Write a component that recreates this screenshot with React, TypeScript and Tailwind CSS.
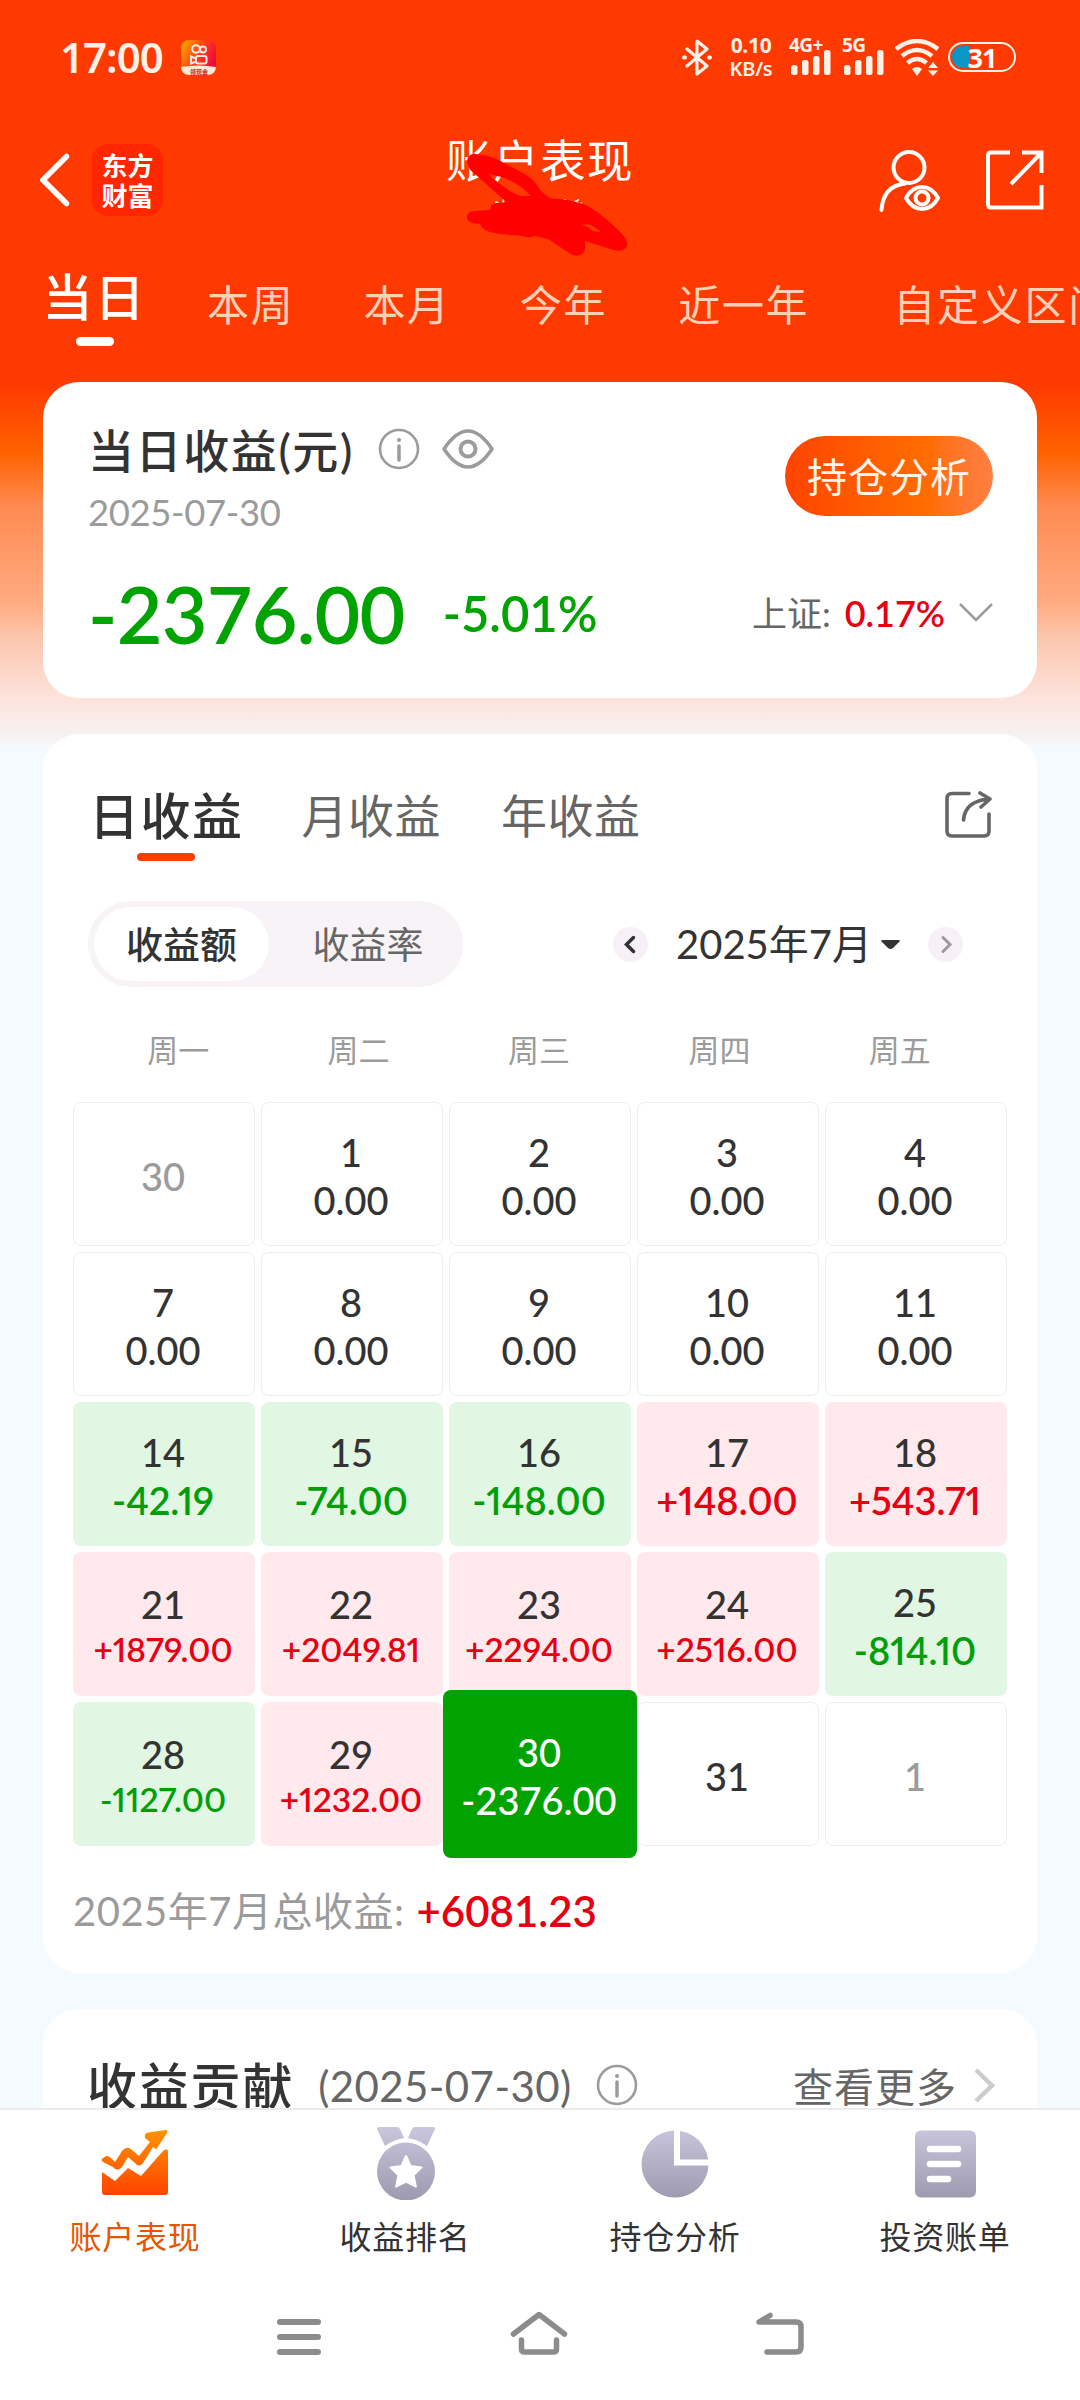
import type { ReactNode } from 'react';
import clsx from 'clsx';

type Tone = 'muted' | 'flat' | 'up' | 'down' | 'selected';

interface DayCell {
  day: number;
  value?: string;
  tone: Tone;
}

const PERIODS = ['当日', '本周', '本月', '今年', '近一年', '自定义区间'];
const WEEKDAYS = ['周一', '周二', '周三', '周四', '周五'];

const DAYS: DayCell[] = [
  { day: 30, tone: 'muted' },
  { day: 1, value: '0.00', tone: 'flat' },
  { day: 2, value: '0.00', tone: 'flat' },
  { day: 3, value: '0.00', tone: 'flat' },
  { day: 4, value: '0.00', tone: 'flat' },
  { day: 7, value: '0.00', tone: 'flat' },
  { day: 8, value: '0.00', tone: 'flat' },
  { day: 9, value: '0.00', tone: 'flat' },
  { day: 10, value: '0.00', tone: 'flat' },
  { day: 11, value: '0.00', tone: 'flat' },
  { day: 14, value: '-42.19', tone: 'down' },
  { day: 15, value: '-74.00', tone: 'down' },
  { day: 16, value: '-148.00', tone: 'down' },
  { day: 17, value: '+148.00', tone: 'up' },
  { day: 18, value: '+543.71', tone: 'up' },
  { day: 21, value: '+1879.00', tone: 'up' },
  { day: 22, value: '+2049.81', tone: 'up' },
  { day: 23, value: '+2294.00', tone: 'up' },
  { day: 24, value: '+2516.00', tone: 'up' },
  { day: 25, value: '-814.10', tone: 'down' },
  { day: 28, value: '-1127.00', tone: 'down' },
  { day: 29, value: '+1232.00', tone: 'up' },
  { day: 30, value: '-2376.00', tone: 'selected' },
  { day: 31, tone: 'flat' },
  { day: 1, tone: 'muted' },
];

function SignalBars() {
  return (
    <svg width="40" height="25" viewBox="0 0 40 25" fill="#fff0e8">
      <rect x="0" y="15" width="6.5" height="10" rx="2.5" />
      <rect x="11" y="10" width="6.5" height="15" rx="2.5" />
      <rect x="22" y="6" width="6.5" height="19" rx="2.5" />
      <rect x="33" y="0" width="6.5" height="25" rx="2.5" />
    </svg>
  );
}

function StatusBar() {
  return (
    <div className="flex h-[114px] items-center pl-[60px] pr-16 font-['Noto_Sans',sans-serif] text-[#fff0e8]">
      <span className="w-[121px] text-[42px] font-semibold leading-none tracking-[-1px]">17:00</span>
      <svg width="35" height="35" viewBox="0 0 35 35">
        <defs>
          <linearGradient id="ks" x1="0" y1="0" x2="1" y2="0.5">
            <stop offset="0" stopColor="#ffb000" />
            <stop offset="0.5" stopColor="#ff4a12" />
            <stop offset="1" stopColor="#f0083c" />
          </linearGradient>
        </defs>
        <rect width="35" height="35" rx="8" fill="url(#ks)" />
        <path d="M0 27q17-3 35 0a8 8 0 0 1-8 8H8a8 8 0 0 1-8-8z" fill="#ffe9d6" />
        <g fill="none" stroke="#ffe9e0" strokeWidth="2">
          <circle cx="15" cy="9" r="3.8" />
          <circle cx="22" cy="9.5" r="3" />
          <rect x="15" y="16" width="10.500" height="7.500" rx="2" />
          <path d="M15 18.500l-5-2v7l5-2z" />
        </g>
        <text x="9" y="33.500" fontSize="6" fontWeight="700" fill="#d8202c" fontFamily="Noto Sans CJK SC">领现金</text>
      </svg>

      <div className="ml-auto flex items-center">
        <svg width="30" height="37" viewBox="0 0 30 37" fill="none" stroke="#fff0e8" strokeWidth="3.200" strokeLinejoin="round" strokeLinecap="round">
          <path d="M5 10l20 17-10 8V2l10 8L5 27" />
          <path d="M2 18.500h1M27 18.500h1" strokeWidth="4" />
        </svg>
        <div className="ml-[17px] flex w-[44px] flex-col items-center text-[21px] font-bold leading-[23px] tracking-[-0.300px]">
          <span>0.10</span>
          <span className="text-[20px] font-semibold">KB/s</span>
        </div>
        <div className="relative ml-[18px] flex h-[36px] w-[42px] items-end">
          <span className="absolute -left-[2px] -top-[3px] text-[19px] font-bold leading-none tracking-[-0.500px]">4G+</span>
          <SignalBars />
        </div>
        <div className="relative ml-[11px] flex h-[36px] w-[42px] items-end">
          <span className="absolute -left-[2px] -top-[3px] text-[19px] font-bold leading-none tracking-[-0.500px]">5G</span>
          <SignalBars />
        </div>
        <svg className="ml-[9px]" width="44" height="37" viewBox="0 0 44 37" fill="none" stroke="#fff0e8" strokeWidth="4.500">
          <path d="M1 10Q22-6 43 10" />
          <path d="M7 17Q22 5 37 17" />
          <path d="M12.500 24Q22 16 31.500 24" />
          <path d="M17 30q5-4 10 0l-5 7z" fill="#fff0e8" stroke="none" />
          <path d="M33 29l5-6 5 6zM33 31.500l5 5.500 5-5.500z" fill="#fff0e8" stroke="none" />
        </svg>
        <div className="relative ml-[9px] flex h-[30px] w-[68px] items-center justify-center rounded-full border-2 border-[#fff0e8]">
          <div className="absolute bottom-[2px] left-[2px] top-[2px] w-[18px] rounded-l-full bg-[#0a96c8]" />
          <span className="relative text-[27px] font-bold leading-none tracking-[-1px] text-white">31</span>
        </div>
      </div>
    </div>
  );
}

function Header() {
  return (
    <div className="relative flex h-[132px] items-center pl-10 pr-9">
      <svg width="30" height="54" viewBox="0 0 30 54" fill="none" stroke="#fff" strokeWidth="5.500" strokeLinecap="round">
        <path d="M26.500 3.500L3 27l23.500 23.500" />
      </svg>
      <div className="ml-[22px] flex h-[72px] w-[71px] flex-col items-center justify-center rounded-2xl bg-[#ff2600] font-['Noto_Sans_CJK_SC',sans-serif] text-[26px] font-bold leading-[30px] text-white">
        <span>东方</span>
        <span>财富</span>
      </div>
      <div className="absolute left-1/2 top-[23px] -translate-x-1/2 text-[45.500px] leading-[48px] tracking-[1.500px] text-white">账户表现</div>
      {/* hand-drawn marker over the account name */}
      <svg className="absolute left-[440px] top-[16px]" width="200" height="130" viewBox="0 0 600 390">
        <path d="M190 208v10M165 216l10 2M375 207v10M395 222l22-14M404 212l30 22M412 228l14-10" stroke="#ffe9dd" strokeWidth="5" fill="none" />
        <path
          fillRule="evenodd"
          fill="#ff0000"
          d="M110 73Q150 76 180 92T245 127T292 167T332 205Q390 208 440 226Q500 262 546 312Q566 335 560 350Q548 368 518 359L435 333Q438 362 426 373Q408 384 386 368L325 328L285 318Q262 326 250 318L180 312Q125 304 120 281Q92 284 82 268Q76 250 96 244L152 239Q150 220 172 219L200 217L92 121Q72 90 90 76Q98 70 110 73ZM145 132Q170 158 218 188L242 198L272 198Q240 160 182 140ZM424 284L445 292L458 302L484 308Q462 288 446 283Z"
        />
      </svg>
      <svg className="ml-auto" width="64" height="64" viewBox="0 0 64 64" fill="none" stroke="#fff" strokeWidth="4">
        <circle cx="31" cy="19.500" r="15.500" />
        <path d="M3.500 62Q5 38 27 35.500" strokeLinecap="round" />
        <path d="M28 50Q34 39 44 39T60 50Q54 61 44 61T28 50Z" strokeLinejoin="round" />
        <circle cx="44" cy="50" r="6.500" />
      </svg>
      <svg className="ml-[44px]" width="58" height="60" viewBox="0 0 58 60" fill="none" stroke="#fff" strokeWidth="4">
        <path d="M24 2.500H5Q2 2.500 2 5.500V54Q2 57.500 5 57.500H55.500V35" />
        <path d="M36 2.500H55.500V23M55 3L25 34" />
      </svg>
    </div>
  );
}

function PeriodTabs() {
  return (
    <div className="flex h-[136px] overflow-hidden whitespace-nowrap pl-[44px]">
      {PERIODS.map((label, i) =>
        i === 0 ? (
          <div key={label} className="flex w-[101px] shrink-0 flex-col items-center pt-[26px] text-white">
            <span className="text-[50px] font-medium leading-[50px] tracking-[2px]">{label}</span>
            <span className="mt-[15px] h-[9px] w-[38px] rounded-full bg-white" />
          </div>
        ) : (
          <span
            key={label}
            className={clsx(
              'shrink-0 pt-[34px] text-[42px] leading-[50px] tracking-[1.700px] text-[#ffd0b8]',
              i === 1 && 'ml-[62px]',
              i > 1 && i < 4 && 'ml-[69px]',
              i === 4 && 'ml-[71px]',
              i === 5 && 'ml-[84px]',
            )}
          >
            {label}
          </span>
        ),
      )}
    </div>
  );
}

function InfoIcon() {
  return (
    <svg width="42" height="42" viewBox="0 0 42 42" fill="none" stroke="#9b9b9b" strokeWidth="2.600">
      <circle cx="21" cy="21" r="19" />
      <path d="M21 18v14" strokeWidth="3.500" strokeLinecap="round" />
      <circle cx="21" cy="12" r="2" fill="#9b9b9b" stroke="none" />
    </svg>
  );
}

function SummaryCard() {
  return (
    <section className="mx-[43px] h-[316px] rounded-[36px] bg-white pl-[45px] pr-[44px] pt-[40px]">
      <div className="flex justify-between">
        <div>
          <div className="flex h-[54px] items-center">
            <h2 className="pt-1 text-[46px] font-medium leading-[54px] tracking-[1.600px] text-[#333]">当日收益(元)</h2>
            <span className="ml-6"><InfoIcon /></span>
            <svg className="ml-[22px]" width="52" height="40" viewBox="0 0 52 40" fill="none" stroke="#9b9b9b" strokeWidth="3.600">
              <path d="M2 20Q14 2 26 2T50 20Q38 38 26 38T2 20Z" strokeLinejoin="round" />
              <circle cx="26" cy="20" r="7.500" strokeWidth="4" />
            </svg>
          </div>
          <div className="mt-[17px] text-[36.500px] leading-[38px] tracking-[-0.400px] text-[#9b9b9b]">2025-07-30</div>
        </div>
        <button className="mt-[14px] h-20 w-[208px] rounded-full bg-linear-to-r from-[#ff4300] via-[#ff6d00] via-70% to-[#ff8042] text-[40px] leading-[82px] tracking-[1px] text-[#fff4ea]">
          持仓分析
        </button>
      </div>
      <div className="mt-[42px] flex h-20 items-center">
        <span className="text-[79px] font-semibold leading-none tracking-[-0.800px] text-[#00a300]">-2376.00</span>
        <span className="ml-[38px] text-[49px] font-semibold leading-none text-[#00a300]">-5.01%</span>
        <span className="ml-auto text-[35px] leading-none text-[#666]">上证:</span>
        <span className="ml-[14px] text-[36px] font-semibold leading-none text-[#e60012]">0.17%</span>
        <svg className="ml-[14px]" width="34" height="20" viewBox="0 0 34 20" fill="none" stroke="#9b9b9b" strokeWidth="2.500">
          <path d="M1 1l16 16L33 1" />
        </svg>
      </div>
    </section>
  );
}

function DayBox({ cell }: { cell: DayCell }) {
  const { day, value, tone } = cell;
  const long = tone !== 'selected' && !!value && value.length > 7;
  return (
    <div
      className={clsx(
        'flex h-36 flex-col items-center justify-center rounded-lg pr-0.5 text-[38px] leading-[48px] text-[#333]',
        long ? 'pt-1.5' : 'pt-[3px]',
        (tone === 'flat' || tone === 'muted') && 'border border-[#eeeeee]',
        tone === 'up' && 'bg-[#ffe9ec]',
        tone === 'down' && 'bg-[#e1f6e3]',
        tone === 'selected' && 'relative z-10 -mx-1.5 -my-3 h-[168px] bg-[#00a300] text-white',
      )}
    >
      <span className={clsx('font-medium', tone === 'muted' && 'text-[#9b9b9b]', long && 'leading-[45px]')}>{day}</span>
      {value && (
        <span
          className={clsx(
            tone === 'up' || tone === 'down' ? 'font-semibold proportional-nums' : 'font-medium',
            tone === 'up' && 'text-[#e60012]',
            tone === 'down' && 'text-[#009f0a]',
            long && 'text-[33.500px] leading-[45px]',
          )}
        >
          {value}
        </span>
      )}
    </div>
  );
}

function CalendarCard() {
  return (
    <section className="mx-[43px] mt-9 h-[1239px] rounded-[36px] bg-white px-[30px] pt-[52px]">
      <div className="flex items-start pl-[16px] pr-[18px]">
        <div className="flex flex-col items-center">
          <span className="text-[50px] font-medium leading-[60px] tracking-[1.500px] text-[#333]">日收益</span>
          <span className="mt-[7px] h-2 w-[58px] rounded-full bg-[#ff3c00]" />
        </div>
        <span className="ml-[58px] text-[46px] leading-[60px] tracking-[0.500px] text-[#666]">月收益</span>
        <span className="ml-[60px] text-[46px] leading-[60px] tracking-[0.500px] text-[#666]">年收益</span>
        <svg className="ml-auto mr-[-3px] mt-[5px]" width="47" height="48" viewBox="0 0 47 48" fill="none" stroke="#666" strokeWidth="3.600" strokeLinecap="round" strokeLinejoin="round">
          <path d="M24 2.500H7Q2 2.500 2 7.500V40Q2 45 7 45H39Q44 45 44 40V23" />
          <path d="M18.500 29Q20 10 44 8M35 2l10 6-9 8" />
        </svg>
      </div>

      <div className="mt-10 flex items-center pl-[15px]">
        <div className="flex h-[86px] w-[375px] items-center rounded-full bg-[#f7f3f7] p-1.5 text-[37px] leading-none">
          <span className="flex h-[74px] w-[175px] items-center justify-center rounded-full bg-white pt-px font-medium text-[#333]">收益额</span>
          <span className="flex-1 pl-2.5 pt-px text-center text-[#666]">收益率</span>
        </div>
        <div className="ml-[150px] flex items-center">
          <svg width="35" height="35" viewBox="0 0 35 35" fill="none">
            <circle cx="17.500" cy="17.500" r="17.500" fill="#f7f1f7" />
            <path d="M20.500 10.500l-7 7 7 7" stroke="#333" strokeWidth="3.500" strokeLinecap="round" />
          </svg>
          <span className="ml-[28px] w-[195px] whitespace-nowrap text-[40px] leading-none text-[#333]">2025年7月</span>
          <svg className="ml-[10px]" width="19" height="9" viewBox="0 0 19 9"><path d="M0 1Q0 0 2 0H17Q19 0 19 1L12 8Q9.500 10 7 8Z" fill="#333" /></svg>
          <svg className="ml-7" width="35" height="35" viewBox="0 0 35 35" fill="none">
            <circle cx="17.500" cy="17.500" r="17.500" fill="#f7f1f7" />
            <path d="M15 10.500l7 7-7 7" stroke="#9b9b9b" strokeWidth="3" strokeLinecap="round" />
          </svg>
        </div>
      </div>

      <div className="mt-[41px] flex h-11 items-center pl-[15px] pr-[17px]">
        {WEEKDAYS.map((d) => (
          <span key={d} className="flex-1 text-center text-[31px] leading-none text-[#9b9b9b]">{d}</span>
        ))}
      </div>

      <div className="mt-[30px] grid grid-cols-5 gap-1.5">
        {DAYS.map((cell, i) => (
          <DayBox key={i} cell={cell} />
        ))}
      </div>

      <div className="mt-10 flex h-[50px] items-center">
        <span className="text-[40px] leading-none tracking-[0.500px] text-[#9b9b9b]">2025年7月总收益:</span>
        <span className="ml-3 text-[42px] font-semibold leading-none text-[#e60012]">+6081.23</span>
      </div>
    </section>
  );
}

function ContributionCard() {
  return (
    <section className="mx-[43px] mt-9 flex h-[99px] items-start overflow-hidden rounded-t-[36px] bg-white pl-[44px] pr-[41px] pt-[47px]">
      <h2 className="text-[50px] font-medium leading-[60px] tracking-[1.800px] text-[#333]">收益贡献</h2>
      <span className="ml-6 text-[42px] leading-[60px] tracking-[0.400px] text-[#666]">(2025-07-30)</span>
      <span className="ml-6 mt-[8px]"><InfoIcon /></span>
      <span className="ml-auto text-[40px] leading-[62px] tracking-[1px] text-[#666]">查看更多</span>
      <svg className="ml-[17px] mt-[12px]" width="22" height="35" viewBox="0 0 22 35" fill="none" stroke="#ccc" strokeWidth="4.500">
        <path d="M2 2l16 15.500L2 33" />
      </svg>
    </section>
  );
}

function NavItem({ label, active, children }: { label: string; active?: boolean; children: ReactNode }) {
  return (
    <div className="flex flex-1 flex-col items-center">
      <svg width="74" height="74" viewBox="0 0 74 74">{children}</svg>
      <span className={clsx('mt-[18px] text-[32px] leading-[38px] tracking-[0.800px]', active ? 'text-[#e85500]' : 'text-[#333]')}>{label}</span>
    </div>
  );
}

function BottomNav() {
  return (
    <nav className="flex h-[180px] border-t-2 border-[#ececee] bg-white pt-4">
      <NavItem label="账户表现" active>
        <defs>
          <linearGradient id="hot" gradientUnits="userSpaceOnUse" x1="0" y1="4" x2="0" y2="70">
            <stop offset="0" stopColor="#ff9400" />
            <stop offset="1" stopColor="#ff4200" />
          </linearGradient>
          <linearGradient id="cool" gradientUnits="userSpaceOnUse" x1="0" y1="2" x2="0" y2="74">
            <stop offset="0" stopColor="#c9c6dc" />
            <stop offset="1" stopColor="#9d99ae" />
          </linearGradient>
        </defs>
        <g fill="url(#hot)">
          <path d="M5 32Q9 28 13 32L17 36L24 25Q29 19 34 24L41 30L52 16L47 12Q46 7 50 6.500L68 4Q70 4 69 7L59 22Q58 24 55 21L45 37Q41 42 37 37L30 31L24 41Q19 46 15 41L5 36Q2 34 5 32Z" />
          <path d="M4 46L17 55L30 42L43 50L65 25Q70 21 70 26V66Q70 69 67 69H7Q4 69 4 66Z" />
        </g>
      </NavItem>
      <NavItem label="收益排名">
        <g fill="url(#cool)">
          <path d="M9 3Q9 1 11 1H29Q31 1 32 3L36 12Q25 14 17 20Z" />
          <path d="M67 3Q67 1 65 1H47Q45 1 44 3L40 12Q51 14 59 20Z" />
          <circle cx="38" cy="45.500" r="29" />
        </g>
        <path d="M38 30l4.500 10 11 1.400-8 7.800 2.400 11.400L38 55.500l-9.900 5.100 2.400-11.400-8-7.800 11-1.400z" fill="#fff" stroke="#fff" strokeWidth="2" strokeLinejoin="round" />
      </NavItem>
      <NavItem label="持仓分析">
        <circle cx="37" cy="38" r="33.500" fill="url(#cool)" />
        <path d="M39 2V36.500H72" fill="none" stroke="#fff" strokeWidth="6" />
      </NavItem>
      <NavItem label="投资账单">
        <rect x="7" y="4.500" width="61" height="67" rx="6" fill="url(#cool)" />
        <path d="M22 23H50M22 38H50M22 53H40" stroke="#fff" strokeWidth="6.500" strokeLinecap="round" />
      </NavItem>
    </nav>
  );
}

function SystemBar() {
  return (
    <div className="flex h-28 items-start justify-center gap-[190px] bg-white pt-[22px]">
      <svg width="48" height="46" viewBox="0 0 48 46" stroke="#8d8b8e" strokeWidth="6" strokeLinecap="round">
        <path d="M5 12H43M5 27H43M5 42H43" />
      </svg>
      <svg className="-mx-[3px]" width="58" height="46" viewBox="0 0 58 46" fill="none" stroke="#8d8b8e" strokeWidth="5.500" strokeLinecap="round" strokeLinejoin="round">
        <path d="M3.500 24L29 4.500L54.500 24" />
        <path d="M11.500 30V39Q11.500 42 14.500 42H43.500Q46.500 42 46.500 39V30" />
      </svg>
      <svg width="50" height="46" viewBox="0 0 50 46" fill="none" stroke="#8d8b8e" strokeWidth="5.500" strokeLinecap="round" strokeLinejoin="round">
        <path d="M15 5.500L4 12H41Q46 12 46 17V37Q46 42 41 42H12" />
      </svg>
    </div>
  );
}

export default function App() {
  return (
    <div className="h-[2400px] w-[1080px] overflow-hidden bg-[#f5faff] font-['Lato','Noto_Sans_CJK_SC',sans-serif]">
      <div className="h-[2108px] bg-[linear-gradient(180deg,#ff3a00_0px,#ff3a00_385px,#ff6200_453px,#ff8a50_505px,#ffab82_603px,#fcc5ac_637px,#fde3dc_698px,#f6f4f6_742px,#f5faff_746px)]">
        <StatusBar />
        <Header />
        <PeriodTabs />
        <SummaryCard />
        <CalendarCard />
        <ContributionCard />
      </div>
      <BottomNav />
      <SystemBar />
    </div>
  );
}
